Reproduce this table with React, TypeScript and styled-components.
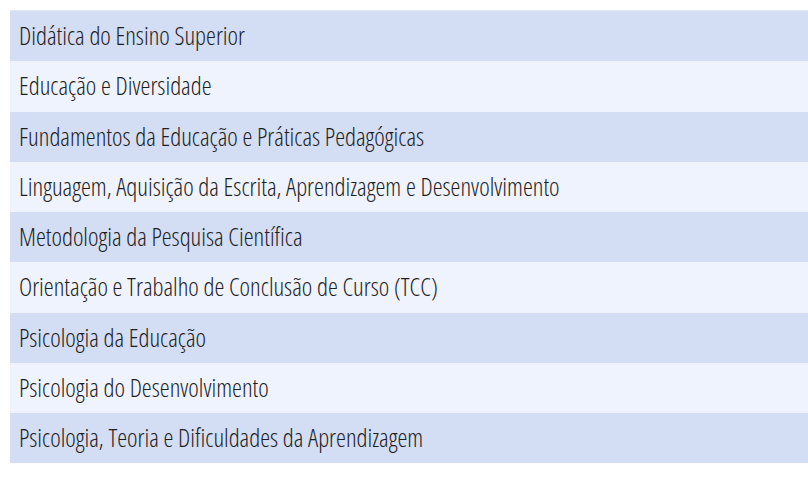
import React from "react";
import styled, { createGlobalStyle } from "styled-components";

const Global = createGlobalStyle`
  html, body { margin: 0; padding: 0; background: #ffffff; }
  body { overflow: hidden; }
`;

const Page = styled.div`
  padding: 10px 0 0 10px;
`;

const List = styled.div`
  display: flex;
  flex-direction: column;
  border-top: 1px solid #e3e9f8;
`;

const Row = styled.div<{ $odd: boolean }>`
  height: 50.25px;
  display: flex;
  align-items: center;
  padding-left: 9px;
  background: ${(p) => (p.$odd ? "#d3ddf4" : "#eff3fe")};
`;

const Label = styled.span`
  font-family: "Open Sans", sans-serif;
  font-size: 25px;
  font-weight: 300;
  font-stretch: 75%;
  color: #1e1e1e;
  white-space: nowrap;
  margin-top: -2px;
`;

const items = [
  "Didática do Ensino Superior",
  "Educação e Diversidade",
  "Fundamentos da Educação e Práticas Pedagógicas",
  "Linguagem, Aquisição da Escrita, Aprendizagem e Desenvolvimento",
  "Metodologia da Pesquisa Científica",
  "Orientação e Trabalho de Conclusão de Curso (TCC)",
  "Psicologia da Educação",
  "Psicologia do Desenvolvimento",
  "Psicologia, Teoria e Dificuldades da Aprendizagem",
];

export default function App() {
  return (
    <Page>
      <Global />
      <List>
        {items.map((t, i) => (
          <Row key={t} $odd={i % 2 === 0}>
            <Label>{t}</Label>
          </Row>
        ))}
      </List>
    </Page>
  );
}
